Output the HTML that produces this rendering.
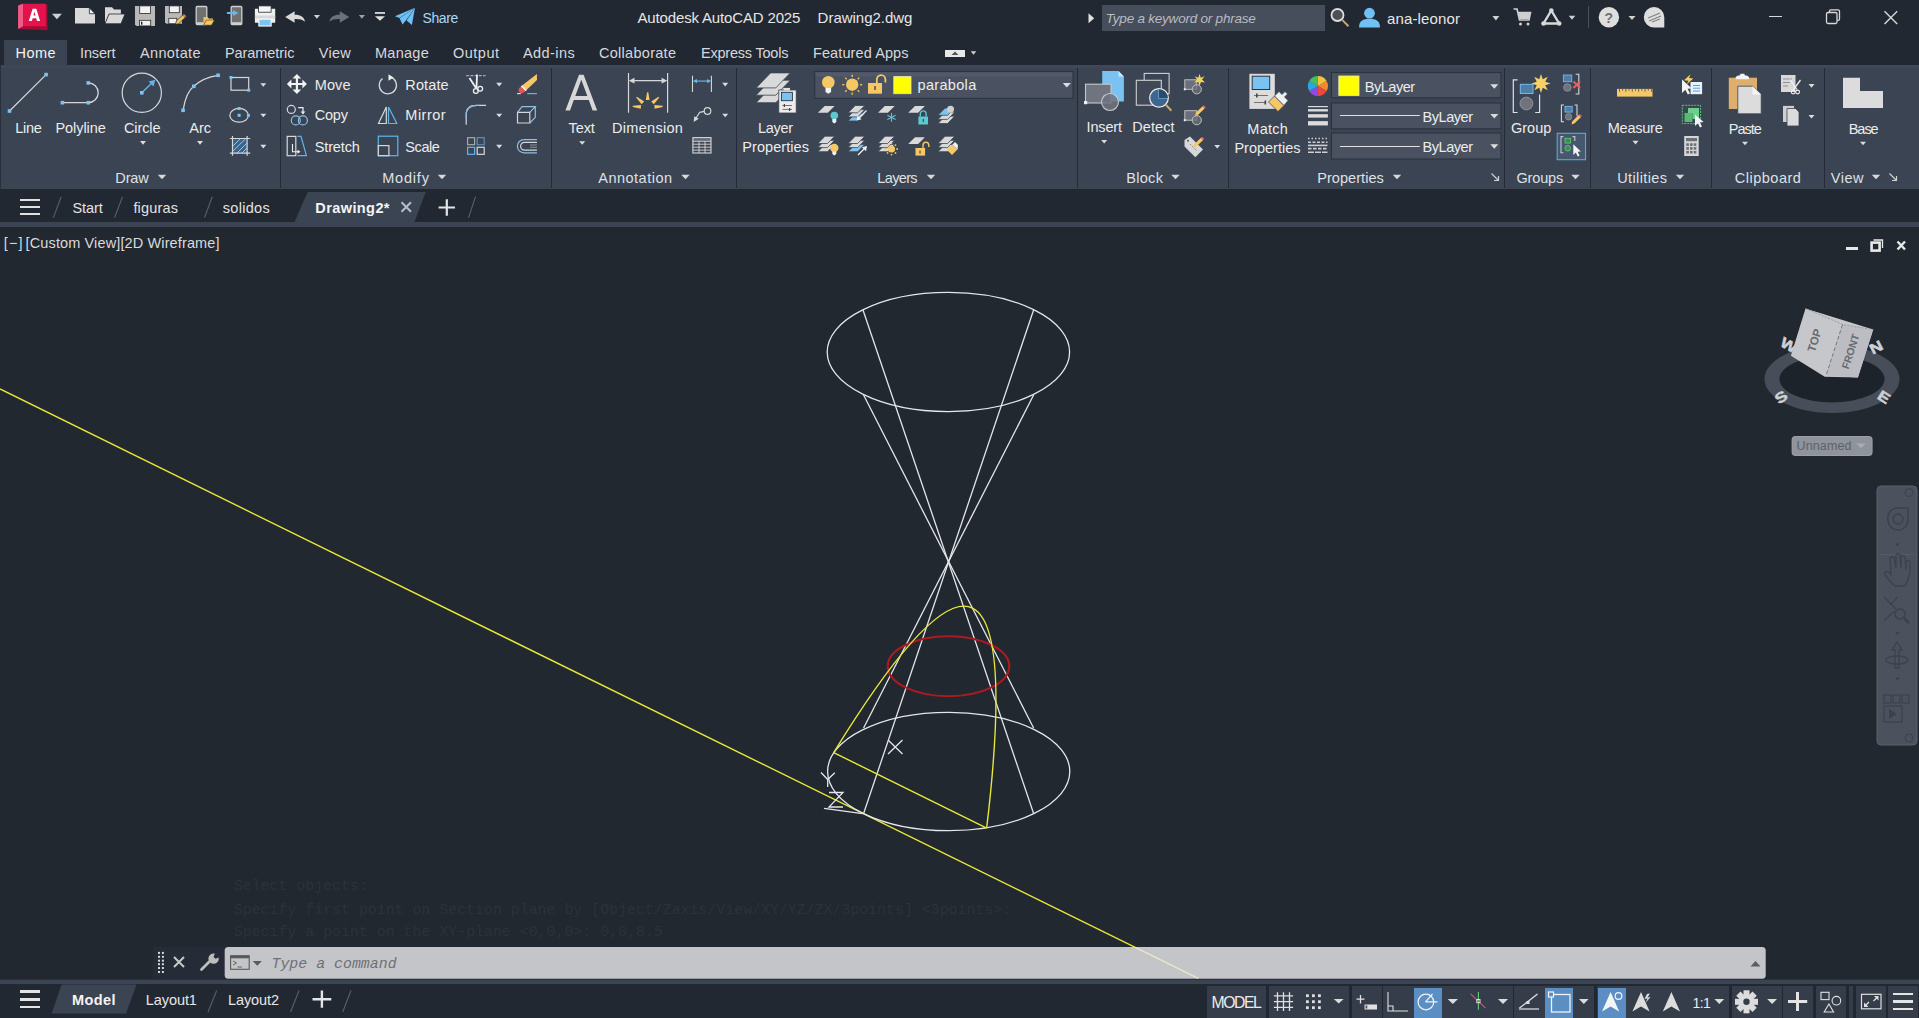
<!DOCTYPE html>
<html><head><meta charset="utf-8"><style>
html,body{margin:0;padding:0;}
body{width:1919px;height:1018px;overflow:hidden;position:relative;background:#212830;font-family:"Liberation Sans",sans-serif;}
body>div,body>svg{position:absolute;}
body>svg{left:0;top:0;}
.t{white-space:nowrap;}
</style></head><body>
<div style="left:0px;top:0px;width:1919px;height:65px;background:#222832;"></div>
<div style="left:0px;top:65px;width:1919px;height:124px;background:#3b4453;"></div>
<div style="left:0px;top:65px;width:1919px;height:3px;background:#3f4858;"></div>
<div style="left:0px;top:65px;width:1px;height:124px;background:#2a303b;"></div>
<div style="left:4px;top:40px;width:63px;height:26px;background:#3b4453;"></div>
<div style="left:280px;top:68px;width:1px;height:120px;background:#252b36;"></div>
<div style="left:551px;top:68px;width:1px;height:120px;background:#252b36;"></div>
<div style="left:736px;top:68px;width:1px;height:120px;background:#252b36;"></div>
<div style="left:1077px;top:68px;width:1px;height:120px;background:#252b36;"></div>
<div style="left:1228px;top:68px;width:1px;height:120px;background:#252b36;"></div>
<div style="left:1504px;top:68px;width:1px;height:120px;background:#252b36;"></div>
<div style="left:1590px;top:68px;width:1px;height:120px;background:#252b36;"></div>
<div style="left:1711px;top:68px;width:1px;height:120px;background:#252b36;"></div>
<div style="left:1824px;top:68px;width:1px;height:120px;background:#252b36;"></div>
<div style="left:0px;top:189px;width:1919px;height:33px;background:#222832;"></div>
<div style="left:0px;top:222px;width:1919px;height:5px;background:#3b4453;"></div>
<div style="left:0px;top:227px;width:1919px;height:752px;background:#212830;"></div>
<div style="left:0px;top:979px;width:1919px;height:5px;background:#3b4453;"></div>
<div style="left:0px;top:984px;width:1919px;height:34px;background:#222832;"></div>
<div class="t" style="left:422.5px;top:11.35px;font-size:14px;line-height:14px;color:#a9d7f7;font-weight:400;font-family:'Liberation Sans',sans-serif;letter-spacing:-0.415px;">Share</div>
<div class="t" style="left:637.5px;top:10.30px;font-size:15px;line-height:15px;color:#e6e6e6;font-weight:400;font-family:'Liberation Sans',sans-serif;letter-spacing:-0.152px;">Autodesk AutoCAD 2025</div>
<div class="t" style="left:817.6px;top:10.30px;font-size:15px;line-height:15px;color:#e6e6e6;font-weight:400;font-family:'Liberation Sans',sans-serif;letter-spacing:-0.023px;">Drawing2.dwg</div>
<div style="left:1102px;top:5px;width:223px;height:26px;background:#464d5b;"></div>
<div class="t" style="left:1105.8px;top:11.57px;font-size:13.5px;line-height:13.5px;color:#b9bcc2;font-weight:400;font-family:'Liberation Sans',sans-serif;font-style:italic;letter-spacing:-0.221px;">Type a keyword or phrase</div>
<div class="t" style="left:1387px;top:10.80px;font-size:15px;line-height:15px;color:#e6e6e6;font-weight:400;font-family:'Liberation Sans',sans-serif;letter-spacing:0.142px;">ana-leonor</div>
<div style="left:1588px;top:6px;width:1px;height:22px;background:#4a505b;"></div>
<div style="left:1768.5px;top:15.5px;width:13px;height:1.3px;background:#d8d8d8;"></div>
<div class="t" style="left:15.5px;top:45.52px;font-size:14.5px;line-height:14.5px;color:#f2f2f2;font-weight:400;font-family:'Liberation Sans',sans-serif;letter-spacing:0.440px;">Home</div>
<div class="t" style="left:80px;top:45.52px;font-size:14.5px;line-height:14.5px;color:#d6d8dc;font-weight:400;font-family:'Liberation Sans',sans-serif;letter-spacing:-0.153px;">Insert</div>
<div class="t" style="left:140px;top:45.52px;font-size:14.5px;line-height:14.5px;color:#d6d8dc;font-weight:400;font-family:'Liberation Sans',sans-serif;letter-spacing:0.350px;">Annotate</div>
<div class="t" style="left:225px;top:45.52px;font-size:14.5px;line-height:14.5px;color:#d6d8dc;font-weight:400;font-family:'Liberation Sans',sans-serif;letter-spacing:-0.067px;">Parametric</div>
<div class="t" style="left:318.75px;top:45.52px;font-size:14.5px;line-height:14.5px;color:#d6d8dc;font-weight:400;font-family:'Liberation Sans',sans-serif;letter-spacing:0.277px;">View</div>
<div class="t" style="left:375px;top:45.52px;font-size:14.5px;line-height:14.5px;color:#d6d8dc;font-weight:400;font-family:'Liberation Sans',sans-serif;letter-spacing:0.270px;">Manage</div>
<div class="t" style="left:453px;top:45.52px;font-size:14.5px;line-height:14.5px;color:#d6d8dc;font-weight:400;font-family:'Liberation Sans',sans-serif;letter-spacing:0.494px;">Output</div>
<div class="t" style="left:523px;top:45.52px;font-size:14.5px;line-height:14.5px;color:#d6d8dc;font-weight:400;font-family:'Liberation Sans',sans-serif;letter-spacing:0.422px;">Add-ins</div>
<div class="t" style="left:599px;top:45.52px;font-size:14.5px;line-height:14.5px;color:#d6d8dc;font-weight:400;font-family:'Liberation Sans',sans-serif;letter-spacing:0.284px;">Collaborate</div>
<div class="t" style="left:701px;top:45.52px;font-size:14.5px;line-height:14.5px;color:#d6d8dc;font-weight:400;font-family:'Liberation Sans',sans-serif;letter-spacing:-0.216px;">Express Tools</div>
<div class="t" style="left:813px;top:45.52px;font-size:14.5px;line-height:14.5px;color:#d6d8dc;font-weight:400;font-family:'Liberation Sans',sans-serif;letter-spacing:0.099px;">Featured Apps</div>
<div style="left:945px;top:49.5px;width:20px;height:7px;background:#e8e8e8;"></div>
<svg width="1919" height="1018" viewBox="0 0 1919 1018"><path d="M18.1 5.6 L23.1 3.75 L47.5 4.5 L47.5 30.3 L18.1 29 Z" fill="#a60a35"/>
<path d="M18.1 5.6 L23.1 3.75 L23.1 26.3 L18.1 29 Z" fill="#ef5c86"/>
<rect x="23.1" y="3.75" width="22.8" height="22.5" fill="#e3134b"/>
<path d="M28.8 21 L32.6 8.8 L36.3 8.8 L40.1 21 L37 21 L36.2 18.3 L32.7 18.3 L31.9 21 Z M33.4 15.6 L35.5 15.6 L34.45 11.8 Z" fill="#ffffff" fill-rule="evenodd"/>
<path d="M51.9 13.75 L61.9 13.75 L56.9 19.25 Z" fill="#d0d0d0"/>
<path d="M75 8.1 L89.4 8.1 L95 13.7 L95 23.4 L75 23.4 Z" fill="#d9d9d9"/>
<path d="M89.4 8.1 L89.4 13.7 L95 13.7 Z" fill="#f4f4f4" stroke="#222832" stroke-width="0.8"/>
<path d="M105 7.2 L112 7.2 L114 9.6 L120.9 9.6 L120.9 14 L109 14 L105 23.7 Z" fill="#d9d9d9"/>
<path d="M109 14 L125 14 L121 23.75 L105 23.75 Z" fill="#d9d9d9" stroke="#222832" stroke-width="0.8"/>
<path d="M135 5.9 L155 5.9 L155 25.9 L136.5 25.9 L135 24.4 Z" fill="#b9b9b9"/>
<rect x="139.7" y="5.9" width="10.9" height="7.5" fill="#f2f2f2" stroke="#2a2a2a" stroke-width="0.8"/>
<rect x="139.5" y="20.3" width="11.2" height="5.6" fill="#f2f2f2" stroke="#2a2a2a" stroke-width="0.8"/>
<rect x="141" y="21.700000000000003" width="1.4" height="3" fill="#222"/>
<path d="M165 5.9 L182 5.9 L182 23.75 L166.5 23.75 L165 22.2 Z" fill="#b9b9b9"/>
<rect x="169.3" y="5.9" width="10" height="6.8" fill="#f2f2f2" stroke="#2a2a2a" stroke-width="0.8"/>
<rect x="168.8" y="18.3" width="8" height="5.4" fill="#f2f2f2" stroke="#2a2a2a" stroke-width="0.8"/>
<path d="M175.5 24.5 L176.3 21 L182.8 15 L185.2 17.4 L178.8 23.6 Z" fill="#f1c55c" stroke="#222" stroke-width="0.6"/>
<path d="M182.8 15 L184 13.9 L186.4 16.3 L185.2 17.4 Z" fill="#e66" />
<rect x="196.2" y="6.5" width="10.600000000000001" height="18.1" rx="1" fill="#707070" stroke="#cfcfcf" stroke-width="1.3"/>
<rect x="196.2" y="22.200000000000003" width="10.600000000000001" height="2.4" fill="#cfcfcf"/>
<path d="M203.5 17 L207.5 17 L208.8 18.4 L213 18.4 L213 20 L206.5 20 L203.5 25 Z" fill="#f3c159"/>
<path d="M206.5 20 L214.5 20 L211.5 25.2 L203.5 25.2 Z" fill="#f6c862" stroke="#222" stroke-width="0.5"/>
<rect x="231.2" y="6.5" width="10.600000000000001" height="18.1" rx="1" fill="#707070" stroke="#cfcfcf" stroke-width="1.3"/>
<rect x="231.2" y="22.200000000000003" width="10.600000000000001" height="2.4" fill="#cfcfcf"/>
<path d="M226.9 12 L233 12 L233 10 L238.4 13 L233 16 L233 14 L226.9 14 Z" fill="#64b8f0"/>
<rect x="254.9" y="8.75" width="20.3" height="14" fill="#f0f0f0"/>
<rect x="254.9" y="15.5" width="20.3" height="3" fill="#d8d8d8"/>
<rect x="258.6" y="5.9" width="12.5" height="6.3" fill="#f6f6f6" stroke="#2a2a2a" stroke-width="0.8"/>
<rect x="258.9" y="19.2" width="12.2" height="6.8" fill="#7cc4f5" stroke="#f4f4f4" stroke-width="1.2"/>
<path d="M285.2 16.9 L294.6 11.2 L294.6 14.8 C300 14.6 304.5 16.8 304.9 21.8 C302.5 19.4 299 18.8 294.6 19 L294.6 22.8 Z" fill="#d9d9d9"/>
<path d="M313.79999999999995 14.999999999999998 L320.0 14.999999999999998 L316.9 18.799999999999997 Z" fill="#d0d0d0"/>
<path d="M349.25 16.9 L339.8 11.2 L339.8 14.8 C334.4 14.6 330 16.8 329.6 21.8 C332 19.4 335.4 18.8 339.8 19 L339.8 22.8 Z" fill="#6b7179"/>
<path d="M358.79999999999995 14.999999999999998 L365.0 14.999999999999998 L361.9 18.799999999999997 Z" fill="#9ba0a7"/>
<rect x="374.9" y="12" width="10.1" height="1.9" fill="#cfcfcf"/>
<path d="M374.9 16.15 L385.0 16.15 L379.95 20.85 Z" fill="#e0e0e0"/>
<path d="M415 7.8 L394.9 16.2 L399.5 18 Z" fill="#6ec0f5"/>
<path d="M415 7.8 L399.6 18.2 L402.5 24.6 L406.2 20.1 Z" fill="#6ec0f5"/>
<path d="M415 7.8 L406.6 20.5 L411.9 25 Z" fill="#6ec0f5"/>
<path d="M1088.5 13.3 L1094.2 18.3 L1088.5 23.3 Z" fill="#e0e0e0"/>
<circle cx="1337.5" cy="15" r="6" fill="#4a4f58" stroke="#dcdcdc" stroke-width="1.8"/>
<line x1="1342" y1="19.6" x2="1348.5" y2="26.2" stroke="#c9a86a" stroke-width="2"/>
<circle cx="1369.5" cy="13.2" r="5.4" fill="#6ec0f5"/>
<path d="M1359 27.5 C1359 21 1363 18.8 1369.5 18.8 C1376 18.8 1380 21 1380 27.5 Z" fill="#6ec0f5"/>
<path d="M1492.4 15.95 L1499.4 15.95 L1495.9 20.45 Z" fill="#d0d0d0"/>
<path d="M1513.5 9 L1517 9 L1519.5 20 L1529 20 L1530.5 12.5 L1518 12.5" fill="none" stroke="#d0d0d0" stroke-width="1.6"/>
<path d="M1518.5 13 L1530 13 L1528.8 19 L1519.6 19 Z" fill="#d0d0d0"/>
<circle cx="1520.5" cy="24" r="1.5" fill="#d0d0d0"/><circle cx="1528" cy="24" r="1.5" fill="#d0d0d0"/>
<path d="M1551.3 10.5 L1543.5 23.5 L1559.2 23.5 Z" fill="none" stroke="#d8d8d8" stroke-width="2.4" stroke-linejoin="round"/>
<circle cx="1551.3" cy="10.5" r="2.3" fill="#d8d8d8"/><circle cx="1543.5" cy="23.5" r="2.3" fill="#d8d8d8"/><circle cx="1559.2" cy="23.5" r="2.3" fill="#d8d8d8"/>
<path d="M1568.75 15.8 L1575.25 15.8 L1572 19.8 Z" fill="#d0d0d0"/>
<circle cx="1608.9" cy="17.2" r="10.2" fill="#dedede"/>
<text x="1608.9" y="22.6" font-family="Liberation Sans" font-size="14" font-weight="700" text-anchor="middle" fill="#6f6f6f">?</text>
<path d="M1628.5 16.0 L1635.5 16.0 L1632 20.0 Z" fill="#d0d0d0"/>
<path d="M1654 7 A10.2 10.2 0 0 0 1643.8 17.2 A10.2 10.2 0 0 0 1654 27.4 L1664.3 27.4 L1664.3 17.2 A10.2 10.2 0 0 0 1654 7 Z" fill="#dedede"/>
<path d="M1648 18 L1660 13 M1649 21 L1661 16 M1652 22 L1660 19" stroke="#808080" stroke-width="1.1"/>
<rect x="1826.5" y="12.5" width="10.5" height="11" rx="1.5" fill="none" stroke="#d8d8d8" stroke-width="1.3"/>
<path d="M1829.5 12.3 L1829.5 11 Q1829.5 9.8 1830.8 9.8 L1838 9.8 Q1839.5 9.8 1839.5 11.3 L1839.5 19 Q1839.5 20.4 1838.3 20.4 L1837.3 20.4" fill="none" stroke="#d8d8d8" stroke-width="1.3"/>
<path d="M1884.5 11.2 L1897.2 23.9 M1897.2 11.2 L1884.5 23.9" stroke="#d8d8d8" stroke-width="1.4"/>
<path d="M951.5 55 L955 51.5 L958.5 55 Z" fill="#555"/>
<path d="M970.75 51.25 L976.25 51.25 L973.5 54.75 Z" fill="#d0d0d0"/></svg>
<div class="t" style="left:115.3px;top:170.52px;font-size:14.5px;line-height:14.5px;color:#dfe1e4;font-weight:400;font-family:'Liberation Sans',sans-serif;letter-spacing:-0.112px;">Draw</div>
<div class="t" style="left:382.2px;top:170.52px;font-size:14.5px;line-height:14.5px;color:#dfe1e4;font-weight:400;font-family:'Liberation Sans',sans-serif;letter-spacing:0.798px;">Modify</div>
<div class="t" style="left:598.3px;top:170.52px;font-size:14.5px;line-height:14.5px;color:#dfe1e4;font-weight:400;font-family:'Liberation Sans',sans-serif;letter-spacing:0.485px;">Annotation</div>
<div class="t" style="left:877.3px;top:170.52px;font-size:14.5px;line-height:14.5px;color:#dfe1e4;font-weight:400;font-family:'Liberation Sans',sans-serif;letter-spacing:-0.645px;">Layers</div>
<div class="t" style="left:1126.2px;top:170.52px;font-size:14.5px;line-height:14.5px;color:#dfe1e4;font-weight:400;font-family:'Liberation Sans',sans-serif;letter-spacing:0.310px;">Block</div>
<div class="t" style="left:1317.2px;top:170.52px;font-size:14.5px;line-height:14.5px;color:#dfe1e4;font-weight:400;font-family:'Liberation Sans',sans-serif;letter-spacing:0.057px;">Properties</div>
<div class="t" style="left:1516.4px;top:170.52px;font-size:14.5px;line-height:14.5px;color:#dfe1e4;font-weight:400;font-family:'Liberation Sans',sans-serif;letter-spacing:-0.130px;">Groups</div>
<div class="t" style="left:1617.2px;top:170.52px;font-size:14.5px;line-height:14.5px;color:#dfe1e4;font-weight:400;font-family:'Liberation Sans',sans-serif;letter-spacing:0.384px;">Utilities</div>
<div class="t" style="left:1734.7px;top:170.52px;font-size:14.5px;line-height:14.5px;color:#dfe1e4;font-weight:400;font-family:'Liberation Sans',sans-serif;letter-spacing:0.517px;">Clipboard</div>
<div class="t" style="left:1830.8px;top:170.52px;font-size:14.5px;line-height:14.5px;color:#dfe1e4;font-weight:400;font-family:'Liberation Sans',sans-serif;letter-spacing:0.511px;">View</div>
<div class="t" style="left:15.3px;top:120.72px;font-size:14.5px;line-height:14.5px;color:#ececec;font-weight:400;font-family:'Liberation Sans',sans-serif;letter-spacing:-0.272px;">Line</div>
<div class="t" style="left:55.4px;top:120.72px;font-size:14.5px;line-height:14.5px;color:#ececec;font-weight:400;font-family:'Liberation Sans',sans-serif;letter-spacing:-0.054px;">Polyline</div>
<div class="t" style="left:124px;top:120.72px;font-size:14.5px;line-height:14.5px;color:#ececec;font-weight:400;font-family:'Liberation Sans',sans-serif;letter-spacing:-0.112px;">Circle</div>
<div class="t" style="left:189.2px;top:120.72px;font-size:14.5px;line-height:14.5px;color:#ececec;font-weight:400;font-family:'Liberation Sans',sans-serif;letter-spacing:0.074px;">Arc</div>
<div class="t" style="left:314.7px;top:77.62px;font-size:14.5px;line-height:14.5px;color:#ececec;font-weight:400;font-family:'Liberation Sans',sans-serif;letter-spacing:0.114px;">Move</div>
<div class="t" style="left:405.3px;top:77.62px;font-size:14.5px;line-height:14.5px;color:#ececec;font-weight:400;font-family:'Liberation Sans',sans-serif;letter-spacing:0.116px;">Rotate</div>
<div class="t" style="left:314.7px;top:108.22px;font-size:14.5px;line-height:14.5px;color:#ececec;font-weight:400;font-family:'Liberation Sans',sans-serif;letter-spacing:-0.184px;">Copy</div>
<div class="t" style="left:405.3px;top:108.22px;font-size:14.5px;line-height:14.5px;color:#ececec;font-weight:400;font-family:'Liberation Sans',sans-serif;letter-spacing:0.509px;">Mirror</div>
<div class="t" style="left:314.7px;top:139.62px;font-size:14.5px;line-height:14.5px;color:#ececec;font-weight:400;font-family:'Liberation Sans',sans-serif;letter-spacing:-0.123px;">Stretch</div>
<div class="t" style="left:405.3px;top:139.62px;font-size:14.5px;line-height:14.5px;color:#ececec;font-weight:400;font-family:'Liberation Sans',sans-serif;letter-spacing:-0.418px;">Scale</div>
<div class="t" style="left:568.6px;top:120.72px;font-size:14.5px;line-height:14.5px;color:#ececec;font-weight:400;font-family:'Liberation Sans',sans-serif;letter-spacing:-0.131px;">Text</div>
<div class="t" style="left:612.1px;top:120.72px;font-size:14.5px;line-height:14.5px;color:#ececec;font-weight:400;font-family:'Liberation Sans',sans-serif;letter-spacing:0.287px;">Dimension</div>
<svg width="1919" height="1018" viewBox="0 0 1919 1018"><path d="M157.75 174.75 L166.25 174.75 L162.00 179.25 Z" fill="#d8d8d8"/>
<path d="M437.75 174.75 L446.25 174.75 L442.00 179.25 Z" fill="#d8d8d8"/>
<path d="M681.25 174.75 L689.75 174.75 L685.50 179.25 Z" fill="#d8d8d8"/>
<path d="M926.75 174.75 L935.25 174.75 L931.00 179.25 Z" fill="#d8d8d8"/>
<path d="M1171.25 174.75 L1179.75 174.75 L1175.50 179.25 Z" fill="#d8d8d8"/>
<path d="M1392.75 174.75 L1401.25 174.75 L1397.00 179.25 Z" fill="#d8d8d8"/>
<path d="M1571.25 174.75 L1579.75 174.75 L1575.50 179.25 Z" fill="#d8d8d8"/>
<path d="M1675.75 174.75 L1684.25 174.75 L1680.00 179.25 Z" fill="#d8d8d8"/>
<path d="M1871.75 174.75 L1880.25 174.75 L1876.00 179.25 Z" fill="#d8d8d8"/>
<path d="M1491.5 173.5 L1498.5 180.5 M1498.5 176 L1498.5 180.5 L1494 180.5" stroke="#d0d0d0" stroke-width="1.2" fill="none"/>
<path d="M1889.5 173.5 L1896.5 180.5 M1896.5 176 L1896.5 180.5 L1892 180.5" stroke="#d0d0d0" stroke-width="1.2" fill="none"/>
<line x1="9.5" y1="111" x2="46.1" y2="74.6" stroke="#d7d7d7" stroke-width="1.2"/>
<rect x="7.70" y="109.20" width="3.6" height="3.6" fill="#7cc3f0"/>
<rect x="44.30" y="72.80" width="3.6" height="3.6" fill="#7cc3f0"/>
<path d="M62.4 102.7 L88.3 102.7 A9.9 9.9 0 0 0 88.3 82.9" fill="none" stroke="#d7d7d7" stroke-width="1.3"/>
<rect x="60.60" y="100.90" width="3.6" height="3.6" fill="#7cc3f0"/>
<rect x="86.50" y="100.90" width="3.6" height="3.6" fill="#7cc3f0"/>
<rect x="86.50" y="81.10" width="3.6" height="3.6" fill="#7cc3f0"/>
<circle cx="141.8" cy="92.8" r="19.6" fill="none" stroke="#d7d7d7" stroke-width="1.2"/>
<line x1="141.8" y1="92.8" x2="153.5" y2="81.5" stroke="#64b4ec" stroke-width="1.4"/>
<path d="M155.3 79.7 L148.5 81.5 L153.5 86.5 Z" fill="#64b4ec"/>
<rect x="140.00" y="91.00" width="3.6" height="3.6" fill="#7cc3f0"/>
<path d="M140.00 141.10 L146.00 141.10 L143.00 144.70 Z" fill="#dcdcdc"/>
<path d="M183.1 110.3 Q186 92 193.8 86.3 Q203 77.5 218.1 75.3" fill="none" stroke="#d7d7d7" stroke-width="1.2"/>
<rect x="181.30" y="108.50" width="3.6" height="3.6" fill="#7cc3f0"/>
<rect x="192.00" y="84.50" width="3.6" height="3.6" fill="#7cc3f0"/>
<rect x="216.30" y="73.50" width="3.6" height="3.6" fill="#7cc3f0"/>
<path d="M197.00 141.10 L203.00 141.10 L200.00 144.70 Z" fill="#dcdcdc"/>
<rect x="231" y="77.5" width="17.7" height="12.7" fill="none" stroke="#d7d7d7" stroke-width="1.2"/>
<rect x="229.50" y="76.00" width="3" height="3" fill="#7cc3f0"/>
<rect x="247.20" y="88.70" width="3" height="3" fill="#7cc3f0"/>
<path d="M260.30 83.20 L266.30 83.20 L263.30 86.80 Z" fill="#dcdcdc"/>
<ellipse cx="239.1" cy="115.3" rx="9.3" ry="6.9" fill="none" stroke="#d7d7d7" stroke-width="1.2"/>
<rect x="237.60" y="107.00" width="3" height="3" fill="#7cc3f0"/>
<rect x="237.60" y="113.80" width="3" height="3" fill="#7cc3f0"/>
<rect x="246.90" y="113.80" width="3" height="3" fill="#7cc3f0"/>
<path d="M260.30 113.70 L266.30 113.70 L263.30 117.30 Z" fill="#dcdcdc"/>
<rect x="232.5" y="138.5" width="14.6" height="14.6" fill="#3b6488"/>
<path d="M233 146 L240 139 M233 151 L245.5 138.8 M237 153 L247 143 M242 153 L247 148" stroke="#8fc8ef" stroke-width="1"/>
<path d="M232.5 135.9 L232.5 155.8 M247.1 135.9 L247.1 155.8 M229.9 138.5 L250.2 138.5 M229.9 153.1 L250.2 153.1" stroke="#d7d7d7" stroke-width="1.2"/>
<path d="M260.30 144.80 L266.30 144.80 L263.30 148.40 Z" fill="#dcdcdc"/>
<path d="M296.9 76 L296.9 92 M288.9 84 L304.9 84" stroke="#f2f2f2" stroke-width="2.2"/>
<path d="M296.9 74 L292.5 78.5 L301.3 78.5 Z M296.9 94 L292.5 89.5 L301.3 89.5 Z M286.9 84 L291.4 79.6 L291.4 88.4 Z M306.9 84 L302.4 79.6 L302.4 88.4 Z" fill="#f2f2f2"/>
<path d="M391 77.2 A8.6 8.6 0 1 1 382.5 78.5" fill="none" stroke="#d7d7d7" stroke-width="1.3"/>
<path d="M388.5 74.2 L393.5 77.5 L388.5 80.8 Z" fill="#f0f0f0"/>
<path d="M466.2 75.7 L485.6 75.7" stroke="#a8a8a8" stroke-width="1.2" stroke-dasharray="3 1.2"/>
<path d="M469.5 78 L476 88 M477 74.5 L476.5 88" stroke="#f0f0f0" stroke-width="1.8"/>
<circle cx="475.8" cy="91" r="2.4" fill="none" stroke="#f0f0f0" stroke-width="1.3"/><circle cx="480.2" cy="88.8" r="2.4" fill="none" stroke="#f0f0f0" stroke-width="1.3"/>
<path d="M496.20 82.80 L502.20 82.80 L499.20 86.40 Z" fill="#dcdcdc"/>
<path d="M536.9 74 L537 80 L525.5 91 L520.8 86.5 Z" fill="#f5c765"/>
<path d="M520.8 86.5 L525.5 91 L523.6 92.8 Q521 94 519.2 92.2 Q517.8 90.5 519 88.3 Z" fill="#e8525a"/>
<path d="M521.4 86 L526.2 90.6" stroke="#f4f4f4" stroke-width="1.5"/>
<path d="M517 93.6 L520.8 93.6" stroke="#d7d7d7" stroke-width="1.2"/><path d="M527.2 93.6 L536.9 93.6" stroke="#64b4ec" stroke-width="1.2"/>
<circle cx="291.3" cy="109.4" r="4" fill="none" stroke="#d7d7d7" stroke-width="1.2"/>
<path d="M298.2 107.6 L303 107.6 L303 112" fill="none" stroke="#f0f0f0" stroke-width="1.2"/><path d="M300.7 111.5 L305.3 111.5 L303 114.5 Z" fill="#f0f0f0"/>
<circle cx="295.8" cy="120.4" r="4.5" fill="none" stroke="#8cc0e6" stroke-width="1.2"/><circle cx="302.9" cy="120.4" r="4.5" fill="none" stroke="#8cc0e6" stroke-width="1.2"/>
<path d="M386.3 107 L386.3 123.5 L378.5 123.5 Z" fill="none" stroke="#d7d7d7" stroke-width="1.2" stroke-linejoin="miter"/>
<path d="M388.5 107 L388.5 123.5 L396.8 123.5 Z" fill="none" stroke="#64b4ec" stroke-width="1.2"/>
<path d="M466.2 124.8 L466.2 114.5 Q466.2 105.4 477 105.4 L486.1 105.4" fill="none" stroke="#d7d7d7" stroke-width="1.2"/>
<path d="M466.2 118 L466.2 114.5 Q466.2 105.4 477 105.4 L479 105.4" fill="none" stroke="#8cb8dc" stroke-width="1.2"/>
<path d="M496.20 113.70 L502.20 113.70 L499.20 117.30 Z" fill="#dcdcdc"/>
<path d="M517.5 112.4 L529.8 112.4 L529.8 123 L517.5 123 Z" fill="none" stroke="#d7d7d7" stroke-width="1.2"/>
<path d="M517.5 112.4 L522 106.6 L535.3 106.6 L529.8 112.4 M535.3 106.6 L535.3 117.3 L529.8 123" fill="none" stroke="#8cc0e6" stroke-width="1.2"/>
<rect x="287.2" y="136.4" width="8.6" height="19.3" fill="none" stroke="#d7d7d7" stroke-width="1.2"/>
<path d="M297.5 136.4 L301 136.4 L306.4 155.7 L297.5 155.7" fill="none" stroke="#64b4ec" stroke-width="1.2"/>
<path d="M292.5 144 L292.5 151.8 L298 151.8" fill="none" stroke="#f0f0f0" stroke-width="1.1"/><path d="M297.5 149.8 L300.5 151.8 L297.5 153.8 Z" fill="#f0f0f0"/>
<rect x="378.3" y="136.2" width="19.5" height="19.5" fill="none" stroke="#64b4ec" stroke-width="1.2"/>
<rect x="378.3" y="145.6" width="10.6" height="10.1" fill="none" stroke="#d7d7d7" stroke-width="1.2"/>
<rect x="467.6" y="137.7" width="7" height="7" fill="none" stroke="#a9a9a9" stroke-width="1.2"/>
<rect x="477.2" y="137.7" width="7" height="7" fill="none" stroke="#5d8fb8" stroke-width="1.2"/>
<rect x="467.6" y="147.3" width="7" height="7" fill="none" stroke="#64b4ec" stroke-width="1.2"/>
<rect x="477.2" y="147.3" width="7" height="7" fill="none" stroke="#d7d7d7" stroke-width="1.2"/>
<path d="M496.20 144.80 L502.20 144.80 L499.20 148.40 Z" fill="#dcdcdc"/>
<path d="M536.9 139.6 L524 139.6 A6.6 6.6 0 0 0 524 152.8 L536.9 152.8" fill="none" stroke="#8cc0e6" stroke-width="1.2"/>
<path d="M536.9 142.3 L524.5 142.3 A3.9 3.9 0 0 0 524.5 150.1 L536.9 150.1" fill="none" stroke="#d7d7d7" stroke-width="1.2"/>
<path d="M530 145 L536.9 145 M530 147.3 L536.9 147.3" stroke="#8a8f96" stroke-width="1"/>
<path d="M565.4 110.5 L579 74.8 L583.6 74.8 L597.2 110.5 L592.6 110.5 L588.8 100 L573.8 100 L570 110.5 Z M575.3 96 L587.3 96 L581.3 79.8 Z" fill="#d7d7d7" fill-rule="evenodd"/>
<path d="M579.20 141.20 L585.20 141.20 L582.20 144.80 Z" fill="#dcdcdc"/>
<path d="M628.5 73 L628.5 112.8 M667.6 73 L667.6 112.8 M631 80.7 L665 80.7" stroke="#d7d7d7" stroke-width="1.2"/>
<path d="M628.8 80.7 L634.5 77.8 L634.5 83.6 Z M667.3 80.7 L661.6 77.8 L661.6 83.6 Z" fill="#d7d7d7"/>
<path d="M649.60 99.90 L648.30 92.20 L647.10 92.20 L645.80 99.90 Z" fill="#f5c765"/>
<path d="M653.80 104.26 L659.25 97.61 L658.45 96.72 L651.26 101.44 Z" fill="#f5c765"/>
<path d="M644.14 101.44 L636.95 96.72 L636.15 97.61 L641.60 104.26 Z" fill="#f5c765"/>
<path d="M654.59 108.74 L662.71 107.01 L662.65 105.82 L654.39 104.95 Z" fill="#f5c765"/>
<path d="M641.01 104.95 L632.75 105.82 L632.69 107.01 L640.81 108.74 Z" fill="#f5c765"/>
<path d="M692.5 75.7 L692.5 92 M711.4 75.7 L711.4 92" stroke="#d7d7d7" stroke-width="1.1"/>
<path d="M694 81.1 L710 81.1" stroke="#64b4ec" stroke-width="1.2"/><path d="M693 81.1 L697 79 L697 83.2 Z M711 81.1 L707 79 L707 83.2 Z" fill="#64b4ec"/>
<path d="M722.20 82.80 L728.20 82.80 L725.20 86.40 Z" fill="#dcdcdc"/>
<circle cx="707.5" cy="111" r="3.3" fill="none" stroke="#d7d7d7" stroke-width="1.2"/>
<path d="M704.2 111.4 L699.7 112.3 L695.5 119" fill="none" stroke="#d7d7d7" stroke-width="1.2"/><path d="M693.7 122 L694.2 116.2 L698.8 118.8 Z" fill="#d7d7d7"/>
<path d="M722.20 113.70 L728.20 113.70 L725.20 117.30 Z" fill="#dcdcdc"/>
<rect x="692.9" y="137.6" width="18.1" height="15.4" fill="none" stroke="#d7d7d7" stroke-width="1.1"/>
<path d="M692.9 141.3 L711 141.3 M692.9 144.2 L711 144.2 M692.9 147.2 L711 147.2 M692.9 150.1 L711 150.1 M699 141.3 L699 153 M705 141.3 L705 153" stroke="#d7d7d7" stroke-width="0.9"/>
<rect x="692.9" y="137.6" width="18.1" height="3.7" fill="#d7d7d7" opacity="0.25"/></svg>
<div class="t" style="left:758px;top:120.72px;font-size:14.5px;line-height:14.5px;color:#ececec;font-weight:400;font-family:'Liberation Sans',sans-serif;letter-spacing:-0.318px;">Layer</div>
<div class="t" style="left:742.3px;top:140.32px;font-size:14.5px;line-height:14.5px;color:#ececec;font-weight:400;font-family:'Liberation Sans',sans-serif;letter-spacing:0.068px;">Properties</div>
<svg width="1919" height="1018" viewBox="0 0 1919 1018"><path d="M756.10 102.70 L770.60 87.70 L790.30 87.70 L775.80 102.70 Z" fill="#d9d9d9" stroke="#3b4453" stroke-width="0.8"/>
<path d="M756.10 95.20 L770.60 80.20 L790.30 80.20 L775.80 95.20 Z" fill="#d9d9d9" stroke="#3b4453" stroke-width="0.8"/>
<path d="M756.10 87.90 L770.60 72.90 L790.30 72.90 L775.80 87.90 Z" fill="#d9d9d9" stroke="#3b4453" stroke-width="0.8"/>
<rect x="778.8" y="90" width="17.4" height="23" fill="#ececec" stroke="#3b4453" stroke-width="0.8"/>
<rect x="783.9" y="88" width="6.1" height="2.5" fill="#e0e0e0"/>
<rect x="781.4" y="92.3" width="11" height="8.4" fill="#79c2f2" stroke="#2a3340" stroke-width="0.9"/>
<path d="M782.5 105.5 L792 105.5 M782.5 109.4 L792 109.4" stroke="#555" stroke-width="0.8"/><rect x="783.8" y="104" width="1.2" height="3" fill="#444"/><rect x="789" y="108" width="1.2" height="3" fill="#444"/>
<rect x="814.7" y="71.6" width="258.3" height="26.7" fill="#4a5262" stroke="#2b313b" stroke-width="1"/>
<rect x="815.5" y="72.4" width="256.7" height="4" fill="#525a6a"/>
<circle cx="828.3" cy="82.3" r="6.3" fill="#f5c765"/><path d="M825.5 88 L831.1 88 L831.1 92 L828.3 93.8 L825.5 92 Z" fill="#f2f2f2"/>
<circle cx="852.2" cy="84.7" r="6.2" fill="#f5c765"/>
<line x1="860.00" y1="84.70" x2="862.20" y2="84.70" stroke="#f5c765" stroke-width="1.3"/>
<line x1="857.72" y1="90.22" x2="859.27" y2="91.77" stroke="#f5c765" stroke-width="1.3"/>
<line x1="852.20" y1="92.50" x2="852.20" y2="94.70" stroke="#f5c765" stroke-width="1.3"/>
<line x1="846.68" y1="90.22" x2="845.13" y2="91.77" stroke="#f5c765" stroke-width="1.3"/>
<line x1="844.40" y1="84.70" x2="842.20" y2="84.70" stroke="#f5c765" stroke-width="1.3"/>
<line x1="846.68" y1="79.18" x2="845.13" y2="77.63" stroke="#f5c765" stroke-width="1.3"/>
<line x1="852.20" y1="76.90" x2="852.20" y2="74.70" stroke="#f5c765" stroke-width="1.3"/>
<line x1="857.72" y1="79.18" x2="859.27" y2="77.63" stroke="#f5c765" stroke-width="1.3"/>
<rect x="868" y="83" width="14" height="10.7" fill="#f5c765"/><path d="M876.8 83 L876.8 79.5 A4.3 4.3 0 0 1 885.4 79.5 L885.4 82.5" fill="none" stroke="#f5c765" stroke-width="1.8"/><rect x="874.4" y="86" width="1.2" height="4" fill="#333"/>
<rect x="893.8" y="76.6" width="17.2" height="17.1" fill="#ffff00" stroke="#e8e8c0" stroke-width="0.8"/></svg>
<div class="t" style="left:917.6px;top:78.12px;font-size:14.5px;line-height:14.5px;color:#ececec;font-weight:400;font-family:'Liberation Sans',sans-serif;letter-spacing:0.309px;">parabola</div>
<div class="t" style="left:1086.5px;top:119.72px;font-size:14.5px;line-height:14.5px;color:#ececec;font-weight:400;font-family:'Liberation Sans',sans-serif;letter-spacing:-0.153px;">Insert</div>
<div class="t" style="left:1132.2px;top:119.72px;font-size:14.5px;line-height:14.5px;color:#ececec;font-weight:400;font-family:'Liberation Sans',sans-serif;letter-spacing:0.099px;">Detect</div>
<div class="t" style="left:1247.3px;top:121.62px;font-size:14.5px;line-height:14.5px;color:#ececec;font-weight:400;font-family:'Liberation Sans',sans-serif;letter-spacing:0.278px;">Match</div>
<div class="t" style="left:1234.4px;top:141.32px;font-size:14.5px;line-height:14.5px;color:#ececec;font-weight:400;font-family:'Liberation Sans',sans-serif;letter-spacing:0.001px;">Properties</div>
<svg width="1919" height="1018" viewBox="0 0 1919 1018"><path d="M1062.80 83.05 L1070.80 83.05 L1066.80 87.55 Z" fill="#dcdcdc"/>
<path d="M817.90 112.80 L824.70 106.00 L834.60 106.00 L827.80 112.80 Z" fill="#d9d9d9"/>
<circle cx="834.3" cy="115.6" r="3.8" fill="#5cc8d0"/><path d="M832.3 119 L836.3 119 L836.3 122 L834.3 123.5 L832.3 122 Z" fill="#f2f2f2"/>
<path d="M848.10 121.00 L855.20 113.70 L864.80 113.70 L857.70 121.00 Z" fill="#7ec4f0" stroke="#3b4453" stroke-width="0.8"/>
<path d="M848.10 116.90 L855.20 109.60 L864.80 109.60 L857.70 116.90 Z" fill="#d9d9d9" stroke="#3b4453" stroke-width="0.8"/>
<path d="M848.10 112.80 L855.20 105.50 L864.80 105.50 L857.70 112.80 Z" fill="#d9d9d9" stroke="#3b4453" stroke-width="0.8"/>
<path d="M866.5 110.5 L858 119" stroke="#f0f0f0" stroke-width="1.2"/><path d="M856.6 120.3 L857.5 115.5 L861.5 119.5 Z" fill="#f0f0f0"/>
<path d="M878.00 112.80 L884.80 106.00 L894.70 106.00 L887.90 112.80 Z" fill="#d9d9d9"/>
<g stroke="#5cc8d0" stroke-width="1.1"><line x1="891.5" y1="113" x2="891.5" y2="121.8"/><line x1="887.4" y1="115.2" x2="895.6" y2="119.6"/><line x1="887.4" y1="119.6" x2="895.6" y2="115.2"/></g>
<path d="M908.20 112.80 L915.00 106.00 L924.90 106.00 L918.10 112.80 Z" fill="#d9d9d9"/>
<rect x="918.4" y="116.5" width="9.6" height="8" fill="#5cc8d0"/><path d="M920.3 116.5 L920.3 113.8 A2.9 2.9 0 0 1 926.1 113.8 L926.1 116.5" fill="none" stroke="#5cc8d0" stroke-width="1.4"/><rect x="922.8" y="119" width="1" height="3" fill="#333"/>
<path d="M938.00 123.50 L945.10 116.20 L954.70 116.20 L947.60 123.50 Z" fill="#d9d9d9" stroke="#3b4453" stroke-width="0.8"/>
<path d="M938.00 119.40 L945.10 112.10 L954.70 112.10 L947.60 119.40 Z" fill="#d9d9d9" stroke="#3b4453" stroke-width="0.8"/>
<path d="M938.00 115.30 L945.10 108.00 L954.70 108.00 L947.60 115.30 Z" fill="#7ec4f0" stroke="#3b4453" stroke-width="0.8"/>
<circle cx="950.5" cy="109.3" r="3.5" fill="#cfcfcf"/>
<path d="M817.90 151.70 L825.00 144.40 L834.60 144.40 L827.50 151.70 Z" fill="#d9d9d9" stroke="#3b4453" stroke-width="0.8"/>
<path d="M817.90 147.60 L825.00 140.30 L834.60 140.30 L827.50 147.60 Z" fill="#d9d9d9" stroke="#3b4453" stroke-width="0.8"/>
<path d="M817.90 143.50 L825.00 136.20 L834.60 136.20 L827.50 143.50 Z" fill="#d9d9d9" stroke="#3b4453" stroke-width="0.8"/>
<circle cx="834.3" cy="148" r="4.2" fill="#f5c765"/><path d="M832.3 151.5 L836.3 151.5 L836.3 154 L834.3 155.6 L832.3 154 Z" fill="#f2f2f2"/>
<path d="M848.10 151.70 L855.20 144.40 L864.80 144.40 L857.70 151.70 Z" fill="#7ec4f0" stroke="#3b4453" stroke-width="0.8"/>
<path d="M848.10 147.60 L855.20 140.30 L864.80 140.30 L857.70 147.60 Z" fill="#d9d9d9" stroke="#3b4453" stroke-width="0.8"/>
<path d="M848.10 143.50 L855.20 136.20 L864.80 136.20 L857.70 143.50 Z" fill="#d9d9d9" stroke="#3b4453" stroke-width="0.8"/>
<path d="M858 155 L866 147" stroke="#f0f0f0" stroke-width="1.2"/><path d="M867 146 L866 151.2 L862 147.2 Z" fill="#f0f0f0"/>
<path d="M878.00 151.70 L885.10 144.40 L894.70 144.40 L887.60 151.70 Z" fill="#d9d9d9" stroke="#3b4453" stroke-width="0.8"/>
<path d="M878.00 147.60 L885.10 140.30 L894.70 140.30 L887.60 147.60 Z" fill="#d9d9d9" stroke="#3b4453" stroke-width="0.8"/>
<path d="M878.00 143.50 L885.10 136.20 L894.70 136.20 L887.60 143.50 Z" fill="#d9d9d9" stroke="#3b4453" stroke-width="0.8"/>
<circle cx="891.5" cy="149" r="3.6" fill="#f5c765"/>
<circle cx="897.10" cy="149.00" r="0.9" fill="#f5c765"/>
<circle cx="895.46" cy="152.96" r="0.9" fill="#f5c765"/>
<circle cx="891.50" cy="154.60" r="0.9" fill="#f5c765"/>
<circle cx="887.54" cy="152.96" r="0.9" fill="#f5c765"/>
<circle cx="885.90" cy="149.00" r="0.9" fill="#f5c765"/>
<circle cx="887.54" cy="145.04" r="0.9" fill="#f5c765"/>
<circle cx="891.50" cy="143.40" r="0.9" fill="#f5c765"/>
<circle cx="895.46" cy="145.04" r="0.9" fill="#f5c765"/>
<path d="M908.20 144.00 L915.00 137.20 L924.90 137.20 L918.10 144.00 Z" fill="#d9d9d9"/>
<rect x="915.5" y="148" width="9.6" height="7.6" fill="#f5c765"/><path d="M923 148 L923 145.2 A2.9 2.9 0 0 1 928.8 145.2 L928.8 147" fill="none" stroke="#f5c765" stroke-width="1.4"/><rect x="919.5" y="150.5" width="1" height="3" fill="#333"/>
<path d="M938.00 151.70 L945.10 144.40 L954.70 144.40 L947.60 151.70 Z" fill="#d9d9d9" stroke="#3b4453" stroke-width="0.8"/>
<path d="M938.00 147.60 L945.10 140.30 L954.70 140.30 L947.60 147.60 Z" fill="#d9d9d9" stroke="#3b4453" stroke-width="0.8"/>
<path d="M938.00 143.50 L945.10 136.20 L954.70 136.20 L947.60 143.50 Z" fill="#d9d9d9" stroke="#3b4453" stroke-width="0.8"/>
<path d="M947 150 L952.5 144.5 L957.5 149.5 L952 155 Z" fill="#f5c765"/><path d="M952.5 144.5 L955 142 L958 145 L957.5 149.5" fill="#f0f0f0"/>
<path d="M1102.2 71.1 L1118.5 71.1 L1123.9 76.5 L1123.9 101.5 L1102.2 101.5 Z" fill="#79c2f2"/>
<path d="M1118.5 71.1 L1118.5 76.5 L1123.9 76.5 Z" fill="#cde8fa"/>
<rect x="1085.5" y="84.2" width="25.5" height="18.8" fill="#707480" stroke="#c8c8c8" stroke-width="1.1"/>
<circle cx="1110" cy="102" r="8.5" fill="#707480" fill-opacity="0.85" stroke="#c8c8c8" stroke-width="1.1"/>
<rect x="1084" y="101" width="3.2" height="3.2" fill="#f0f0f0"/>
<path d="M1101.20 140.00 L1107.20 140.00 L1104.20 143.60 Z" fill="#dcdcdc"/>
<rect x="1144.2" y="73.4" width="24.9" height="20.3" fill="none" stroke="#d0d0d0" stroke-width="1.1"/>
<rect x="1136.3" y="80.3" width="25" height="24.9" fill="#414958" stroke="#d0d0d0" stroke-width="1.1"/>
<circle cx="1159" cy="97.9" r="9.3" fill="#3d6690" stroke="#e8e8e8" stroke-width="1.3"/>
<path d="M1159 89 L1159 97.9 L1167.8 97.9" fill="none" stroke="#79c2f2" stroke-width="1.1"/><path d="M1159 97.9 L1159 89.2 A8.7 8.7 0 0 1 1167.7 97.9 Z" fill="#2c4a6a"/>
<line x1="1165.8" y1="104.8" x2="1171.4" y2="110.8" stroke="#c9a86a" stroke-width="2"/>
<rect x="1184.8" y="79.8" width="12" height="9.5" fill="#6b6f7b" stroke="#c8c8c8" stroke-width="0.9"/>
<circle cx="1196.8" cy="89.3" r="4.6" fill="#6b6f7b" fill-opacity="0.8" stroke="#c8c8c8" stroke-width="0.9"/>
<rect x="1183.8" y="88.3" width="2" height="2" fill="#eee"/>
<path d="M1199.5 73.8 L1200.8 77.8 L1204.7 76.3 L1202 79.6 L1205 82.5 L1201 82 L1199.5 86 L1198.3 82 L1194.3 82.5 L1197.2 79.6 L1194.5 76.3 L1198.3 77.8 Z" fill="#f6d060"/>
<rect x="1184.8" y="110.7" width="12" height="9.5" fill="#6b6f7b" stroke="#c8c8c8" stroke-width="0.9"/>
<circle cx="1196.8" cy="120.2" r="4.6" fill="#6b6f7b" fill-opacity="0.8" stroke="#c8c8c8" stroke-width="0.9"/>
<rect x="1183.8" y="119.2" width="2" height="2" fill="#eee"/>
<path d="M1195 116 L1196 112.5 L1202.5 106.3 L1204.6 108.4 L1198.2 114.8 Z" fill="#f5c765"/><path d="M1202.5 106.3 L1203.6 105.2 L1205.7 107.3 L1204.6 108.4 Z" fill="#e66"/>
<path d="M1184.5 140 L1190 136.5 L1203 149.5 L1195.3 157.2 L1184.5 146.5 Z" fill="#d8d8d8"/>
<circle cx="1188" cy="140.8" r="1" fill="#555"/><path d="M1190 144 L1197 151" stroke="#777" stroke-width="0.8" stroke-dasharray="1.5 1"/>
<path d="M1193.5 147.5 L1194.5 144 L1201 137.8 L1203.1 139.9 L1196.7 146.3 Z" fill="#f5c765"/><path d="M1201 137.8 L1202.1 136.7 L1204.2 138.8 L1203.1 139.9 Z" fill="#e66"/>
<path d="M1214.20 145.00 L1220.20 145.00 L1217.20 148.60 Z" fill="#dcdcdc"/>
<rect x="1249.4" y="73.8" width="25.4" height="35.1" fill="#dcdcdc"/>
<rect x="1252.2" y="76.2" width="17.5" height="13.3" fill="#79c2f2" stroke="#2a3340" stroke-width="1"/>
<path d="M1254 95.5 L1268 95.5 M1254 102.5 L1266 102.5" stroke="#666" stroke-width="0.9"/><rect x="1256" y="93.5" width="1.6" height="4" fill="#444"/><rect x="1264.5" y="100.5" width="1.6" height="4" fill="#444"/>
<path d="M1268.5 102 L1274.5 96 L1284 105.5 L1278 111.5 Z" fill="#f5c765" stroke="#3b4453" stroke-width="0.7"/>
<path d="M1274.5 96 L1279 91.5 L1282 94.5 L1285 91.5 L1287.5 94 L1284.5 97 L1288 100.5 L1284 105.5 Z" fill="#efefef" stroke="#3b4453" stroke-width="0.7"/>
<path d="M1317.9 85.9 L1317.90 75.90 A10 10 0 0 1 1326.56 80.90 Z" fill="#f6c23e"/>
<path d="M1317.9 85.9 L1326.56 80.90 A10 10 0 0 1 1326.56 90.90 Z" fill="#f5892f"/>
<path d="M1317.9 85.9 L1326.56 90.90 A10 10 0 0 1 1317.90 95.90 Z" fill="#e9483f"/>
<path d="M1317.9 85.9 L1317.90 95.90 A10 10 0 0 1 1309.24 90.90 Z" fill="#8c4de0"/>
<path d="M1317.9 85.9 L1309.24 90.90 A10 10 0 0 1 1309.24 80.90 Z" fill="#2fa6e0"/>
<path d="M1317.9 85.9 L1309.24 80.90 A10 10 0 0 1 1317.90 75.90 Z" fill="#45c05a"/>
<rect x="1308" y="106.0" width="19.9" height="1.2" fill="#dcdcdc"/>
<rect x="1308" y="109.1" width="19.9" height="2.4" fill="#dcdcdc"/>
<rect x="1308" y="114.2" width="19.9" height="3.4" fill="#dcdcdc"/>
<rect x="1308" y="121.14999999999999" width="19.9" height="4.3" fill="#dcdcdc"/>
<line x1="1308" y1="138.5" x2="1327.5" y2="138.5" stroke="#cfcfcf" stroke-width="1.6" stroke-dasharray="1.5 2"/>
<line x1="1308" y1="142.2" x2="1327.5" y2="142.2" stroke="#cfcfcf" stroke-width="1.6" stroke-dasharray="3 1.5"/>
<line x1="1308" y1="145.4" x2="1327.5" y2="145.4" stroke="#cfcfcf" stroke-width="1.6"/>
<line x1="1308" y1="148.6" x2="1327.5" y2="148.6" stroke="#cfcfcf" stroke-width="1.6" stroke-dasharray="3.5 1.5"/>
<line x1="1308" y1="152.3" x2="1327.5" y2="152.3" stroke="#cfcfcf" stroke-width="1.6" stroke-dasharray="6 1"/>
<rect x="1331.5" y="72.6" width="169.5" height="25.200000000000003" fill="#4a5262" stroke="#2b313b" stroke-width="1"/>
<rect x="1331.5" y="103" width="169.5" height="25.80000000000001" fill="#4a5262" stroke="#2b313b" stroke-width="1"/>
<rect x="1331.5" y="133" width="169.5" height="26" fill="#4a5262" stroke="#2b313b" stroke-width="1"/>
<rect x="1338.8" y="76" width="20.2" height="19.5" fill="#ffff00" stroke="#e8e8c0" stroke-width="0.8"/></svg>
<div class="t" style="left:1364.7px;top:79.82px;font-size:14.5px;line-height:14.5px;color:#ececec;font-weight:400;font-family:'Liberation Sans',sans-serif;letter-spacing:-0.449px;">ByLayer</div>
<div class="t" style="left:1422.5px;top:109.62px;font-size:14.5px;line-height:14.5px;color:#ececec;font-weight:400;font-family:'Liberation Sans',sans-serif;letter-spacing:-0.449px;">ByLayer</div>
<div class="t" style="left:1422.5px;top:140.12px;font-size:14.5px;line-height:14.5px;color:#ececec;font-weight:400;font-family:'Liberation Sans',sans-serif;letter-spacing:-0.449px;">ByLayer</div>
<div class="t" style="left:1510.9px;top:120.82px;font-size:14.5px;line-height:14.5px;color:#ececec;font-weight:400;font-family:'Liberation Sans',sans-serif;letter-spacing:0.025px;">Group</div>
<div class="t" style="left:1607.8px;top:120.82px;font-size:14.5px;line-height:14.5px;color:#ececec;font-weight:400;font-family:'Liberation Sans',sans-serif;letter-spacing:-0.253px;">Measure</div>
<div class="t" style="left:1728.8px;top:121.72px;font-size:14.5px;line-height:14.5px;color:#ececec;font-weight:400;font-family:'Liberation Sans',sans-serif;letter-spacing:-1.020px;">Paste</div>
<div class="t" style="left:1848.7px;top:121.72px;font-size:14.5px;line-height:14.5px;color:#ececec;font-weight:400;font-family:'Liberation Sans',sans-serif;letter-spacing:-1.017px;">Base</div>
<svg width="1919" height="1018" viewBox="0 0 1919 1018"><path d="M1490.30 84.15 L1498.30 84.15 L1494.30 88.65 Z" fill="#dcdcdc"/>
<line x1="1340" y1="115.5" x2="1419.8" y2="115.5" stroke="#e0e0e0" stroke-width="1.2"/>
<path d="M1490.30 113.95 L1498.30 113.95 L1494.30 118.45 Z" fill="#dcdcdc"/>
<line x1="1340" y1="146.5" x2="1419.8" y2="146.5" stroke="#e0e0e0" stroke-width="1.2"/>
<path d="M1490.30 144.25 L1498.30 144.25 L1494.30 148.75 Z" fill="#dcdcdc"/>
<path d="M1517.6 79.8 L1513.3 79.8 L1513.3 112.5 L1517.6 112.5 M1535.2 112.5 L1539.6 112.5 L1539.6 94.4" fill="none" stroke="#e0e0e0" stroke-width="1.2"/>
<rect x="1520.3" y="84.3" width="12.7" height="9.2" fill="#4e7ea8" stroke="#79c2f2" stroke-width="0.9"/>
<circle cx="1526.4" cy="103.5" r="6.4" fill="#6f737c" stroke="#9a9ea6" stroke-width="0.8"/>
<path d="M1541.00 74.00 L1542.76 79.25 L1547.72 76.78 L1545.25 81.74 L1550.50 83.50 L1545.25 85.26 L1547.72 90.22 L1542.76 87.75 L1541.00 93.00 L1539.24 87.75 L1534.28 90.22 L1536.75 85.26 L1531.50 83.50 L1536.75 81.74 L1534.28 76.78 L1539.24 79.25 Z" fill="#f6d06a"/>
<path d="M1575.6 74.3 L1578.8 74.3 L1578.8 94 L1575.6 94" fill="none" stroke="#d8d8d8" stroke-width="1.1"/>
<rect x="1563.3" y="75" width="8.5" height="6.8" fill="#4e7ea8" stroke="#79c2f2" stroke-width="0.8"/><circle cx="1567.4" cy="87.5" r="3.8" fill="#6f737c" stroke="#9a9ea6" stroke-width="0.7"/>
<path d="M1573.5 81.5 L1580 88 M1580 81.5 L1573.5 88" stroke="#ef5a62" stroke-width="2"/>
<path d="M1564 105 L1561.4 105 L1561.4 121.8 L1564 121.8 M1574.5 105 L1577 105 L1577 116" fill="none" stroke="#d8d8d8" stroke-width="1.1"/>
<rect x="1565" y="106.3" width="7.2" height="5.8" fill="#4e7ea8" stroke="#79c2f2" stroke-width="0.8"/><circle cx="1568.6" cy="116.8" r="3.2" fill="#6f737c" stroke="#9a9ea6" stroke-width="0.7"/>
<path d="M1571.5 124.5 L1572.2 121.4 L1578.6 115 L1580.8 117.2 L1574.4 123.6 Z" fill="#f5c765"/><path d="M1578.6 115 L1579.7 113.9 L1581.9 116.1 L1580.8 117.2 Z" fill="#e66"/>
<rect x="1557.2" y="133.3" width="28.3" height="26.4" fill="#45586d" stroke="#5aa8e0" stroke-width="1.1"/>
<path d="M1563.4 136.6 L1561 136.6 L1561 152.8 L1563.4 152.8 M1572.5 136.6 L1574.8 136.6 L1574.8 141" fill="none" stroke="#c8c8c8" stroke-width="1.1"/>
<rect x="1565" y="138.3" width="5.6" height="4.8" fill="#3d8a55" stroke="#5fcf7a" stroke-width="0.8"/><circle cx="1567.7" cy="148.2" r="2.8" fill="#3d8a55" stroke="#5fcf7a" stroke-width="0.8"/>
<path d="M1573.3 144.3 L1573.3 155 L1575.8 152.6 L1577.8 156.6 L1579.6 155.7 L1577.6 151.8 L1580.8 151.6 Z" fill="#f4f4f4"/>
<rect x="1617" y="88.9" width="35.5" height="7.7" fill="#f5c86a"/>
<rect x="1619.00" y="88.9" width="0.9" height="2.8" fill="#6b5a30"/>
<rect x="1622.20" y="88.9" width="0.9" height="1.8" fill="#6b5a30"/>
<rect x="1625.40" y="88.9" width="0.9" height="2.8" fill="#6b5a30"/>
<rect x="1628.60" y="88.9" width="0.9" height="1.8" fill="#6b5a30"/>
<rect x="1631.80" y="88.9" width="0.9" height="2.8" fill="#6b5a30"/>
<rect x="1635.00" y="88.9" width="0.9" height="1.8" fill="#6b5a30"/>
<rect x="1638.20" y="88.9" width="0.9" height="2.8" fill="#6b5a30"/>
<rect x="1641.40" y="88.9" width="0.9" height="1.8" fill="#6b5a30"/>
<rect x="1644.60" y="88.9" width="0.9" height="2.8" fill="#6b5a30"/>
<rect x="1647.80" y="88.9" width="0.9" height="1.8" fill="#6b5a30"/>
<rect x="1651.00" y="88.9" width="0.9" height="2.8" fill="#6b5a30"/>
<path d="M1632.50 140.80 L1638.50 140.80 L1635.50 144.40 Z" fill="#dcdcdc"/>
<rect x="1690.5" y="82" width="11.6" height="12.2" fill="#e8f2fb"/><path d="M1693 85.5 L1700 85.5 M1693 88.2 L1700 88.2 M1693 91 L1700 91" stroke="#5aa0d8" stroke-width="1"/>
<path d="M1690.5 74.3 L1684 80.3 L1688.5 80.8 L1686.5 84.5 L1693.3 78.5 L1689 78 Z" fill="#f6d06a"/>
<path d="M1682 79.5 L1682 93 L1685.3 89.8 L1687.8 94.6 L1690 93.5 L1687.6 88.8 L1691.8 88.5 Z" fill="#f4f4f4"/>
<rect x="1682.3" y="105.3" width="18.3" height="18.3" fill="none" stroke="#5fcf7a" stroke-width="0.9" stroke-dasharray="2 1"/>
<path d="M1688 108 L1699 108 L1699 119 L1692.5 119 L1692.5 113 L1688 113 Z" fill="#6dcf8a"/><path d="M1684.5 113 L1692.5 113 L1692.5 122 L1684.5 122 Z" fill="#58b874"/>
<path d="M1695 114.5 L1695 126 L1697.9 123.2 L1700 127.5 L1702 126.5 L1699.8 122.4 L1703.6 122 Z" fill="#f4f4f4"/>
<rect x="1684.2" y="136" width="14.5" height="20" fill="#d6d6d6"/><rect x="1686" y="138" width="11" height="3.2" fill="#6a6f78"/>
<rect x="1686.30" y="143.30" width="2.6" height="2.6" fill="#6a6f78"/>
<rect x="1690.00" y="143.30" width="2.6" height="2.6" fill="#6a6f78"/>
<rect x="1693.70" y="143.30" width="2.6" height="2.6" fill="#6a6f78"/>
<rect x="1686.30" y="147.10" width="2.6" height="2.6" fill="#6a6f78"/>
<rect x="1690.00" y="147.10" width="2.6" height="2.6" fill="#6a6f78"/>
<rect x="1693.70" y="147.10" width="2.6" height="2.6" fill="#6a6f78"/>
<rect x="1686.30" y="150.90" width="2.6" height="2.6" fill="#6a6f78"/>
<rect x="1690.00" y="150.90" width="2.6" height="2.6" fill="#6a6f78"/>
<rect x="1693.70" y="150.90" width="2.6" height="2.6" fill="#6a6f78"/>
<rect x="1728.8" y="77.7" width="28.2" height="31.3" fill="#deae6c"/>
<path d="M1735.7 79.3 L1735.7 77 Q1737 75.3 1740 75.3 L1740.5 73.8 L1744.3 73.8 L1744.8 75.3 Q1748 75.3 1749 77 L1749 79.3 Z" fill="#f4f4f4"/>
<path d="M1737.8 86.2 L1752.5 86.2 L1761.2 94.4 L1761.2 113.8 L1737.8 113.8 Z" fill="#dcdcdc" stroke="#3b4453" stroke-width="0.8"/>
<path d="M1752.5 86.2 L1752.5 94.4 L1761.2 94.4 Z" fill="#f4f4f4"/>
<path d="M1742.00 141.70 L1748.00 141.70 L1745.00 145.30 Z" fill="#dcdcdc"/>
<rect x="1781" y="75" width="14.5" height="17" fill="#d8d8d8"/><path d="M1783 79 L1792 79 M1783 82.5 L1790 82.5 M1783 86 L1788 86" stroke="#8a8a8a" stroke-width="0.9"/>
<path d="M1790 79.5 L1797 89.5 M1800.5 80 L1793.5 89.5" stroke="#f0f0f0" stroke-width="1.3"/><circle cx="1793.2" cy="92" r="1.9" fill="none" stroke="#f0f0f0" stroke-width="1.1"/><circle cx="1797.6" cy="92" r="1.9" fill="none" stroke="#f0f0f0" stroke-width="1.1"/>
<path d="M1808.50 84.10 L1814.50 84.10 L1811.50 87.70 Z" fill="#dcdcdc"/>
<path d="M1783 105.9 L1794 105.9 L1794 122 L1783 122 Z" fill="#cfcfcf"/>
<path d="M1787 108.5 L1795.5 108.5 L1799 112 L1799 126 L1787 126 Z" fill="#dcdcdc" stroke="#3b4453" stroke-width="0.8"/>
<path d="M1808.50 115.00 L1814.50 115.00 L1811.50 118.60 Z" fill="#dcdcdc"/>
<path d="M1843 77.7 L1860 77.7 L1860 91 L1883 91 L1883 108 L1843 108 Z" fill="#dcdcdc"/>
<path d="M1860.00 141.70 L1866.00 141.70 L1863.00 145.30 Z" fill="#dcdcdc"/></svg>
<div style="left:20.3px;top:198.60000000000002px;width:20.1px;height:2.4px;background:#e0e0e0;"></div>
<div style="left:20.3px;top:205.70000000000002px;width:20.1px;height:2.4px;background:#e0e0e0;"></div>
<div style="left:20.3px;top:212.8px;width:20.1px;height:2.4px;background:#e0e0e0;"></div>
<div class="t" style="left:72.4px;top:201.42px;font-size:14.5px;line-height:14.5px;color:#e2e2e2;font-weight:400;font-family:'Liberation Sans',sans-serif;letter-spacing:-0.031px;">Start</div>
<div class="t" style="left:133.4px;top:201.42px;font-size:14.5px;line-height:14.5px;color:#e2e2e2;font-weight:400;font-family:'Liberation Sans',sans-serif;letter-spacing:0.180px;">figuras</div>
<div class="t" style="left:222.8px;top:201.42px;font-size:14.5px;line-height:14.5px;color:#e2e2e2;font-weight:400;font-family:'Liberation Sans',sans-serif;letter-spacing:0.294px;">solidos</div>
<svg width="1919" height="1018" viewBox="0 0 1919 1018"><line x1="53.4" y1="217.6" x2="61.2" y2="196.7" stroke="#59606c" stroke-width="1.1"/>
<line x1="114.6" y1="217.6" x2="122.5" y2="196.7" stroke="#59606c" stroke-width="1.1"/>
<line x1="204.5" y1="217.6" x2="212.3" y2="196.7" stroke="#59606c" stroke-width="1.1"/>
<line x1="468.5" y1="217.6" x2="475.5" y2="196.7" stroke="#59606c" stroke-width="1.1"/>
<path d="M294.6 222 L307.6 192 L425.8 192 L414.4 222 Z" fill="#3b4453"/></svg>
<div class="t" style="left:315.3px;top:201.42px;font-size:14.5px;line-height:14.5px;color:#f4f4f4;font-weight:700;font-family:'Liberation Sans',sans-serif;letter-spacing:0.412px;">Drawing2*</div>
<div class="t" style="left:3.8px;top:236.32px;font-size:14.5px;line-height:14.5px;color:#d8dadd;font-weight:400;font-family:'Liberation Sans',sans-serif;letter-spacing:1.088px;">[−]</div>
<div class="t" style="left:25.6px;top:236.32px;font-size:14.5px;line-height:14.5px;color:#d8dadd;font-weight:400;font-family:'Liberation Sans',sans-serif;letter-spacing:0.123px;">[Custom View][2D Wireframe]</div>
<div style="left:1846px;top:246.5px;width:11.5px;height:3px;background:#e8e8e8;"></div>
<svg width="1919" height="1018" viewBox="0 0 1919 1018"><path d="M401.5 202.2 L411 211.8 M411 202.2 L401.5 211.8" stroke="#b8bcc4" stroke-width="2"/>
<path d="M446.8 199.3 L446.8 215.7 M438.6 207.5 L455 207.5" stroke="#e4e4e4" stroke-width="2.2"/>
<path d="M1873.5 240 L1882.5 240 L1882.5 248" fill="none" stroke="#e8e8e8" stroke-width="1.3"/><rect x="1871.6" y="242.6" width="8" height="8" fill="none" stroke="#e8e8e8" stroke-width="2.6"/>
<path d="M1897.5 241.5 L1905 249.5 M1905 241.5 L1897.5 249.5" stroke="#e8e8e8" stroke-width="2.4"/>
<defs><radialGradient id="vcg" cx="50%" cy="50%" r="50%"><stop offset="0" stop-color="#2a313b" stop-opacity="0.9"/><stop offset="1" stop-color="#212830" stop-opacity="0"/></radialGradient></defs>
<ellipse cx="1832" cy="379" rx="53" ry="23" fill="#1d232b"/>
<path d="M1764.5 379 A67.5 34 0 0 0 1899.5 379 A67.5 34 0 0 0 1764.5 379 Z M1779.5 379 A52.5 23.5 0 0 1 1884.5 379 A52.5 23.5 0 0 1 1779.5 379 Z" fill="#474e59" fill-rule="evenodd"/>
<g font-family="Liberation Sans" font-weight="700" fill="#cdd0d4" font-size="18" text-anchor="middle" stroke="#cdd0d4" stroke-width="0.6"><text x="0" y="6.5" transform="translate(1781 397) rotate(-35) scale(1 0.8)">S</text><text x="0" y="6.5" transform="translate(1884 397) rotate(33) scale(1 0.8)">E</text><text x="0" y="6.5" transform="translate(1789 345) rotate(30) scale(1 0.8)">W</text><text x="0" y="6.5" transform="translate(1876 347) rotate(-28) scale(1 0.8)">N</text></g>
<path d="M1805.5 308.5 L1873.2 329.6 L1857.9 377.5 L1824.7 376.8 L1790.9 355.8 Z" fill="#c6c7cb"/>
<path d="M1842.6 324.5 L1873.2 329.6 L1857.9 377.5 L1826 375.6 Z" fill="#bcbdc2"/>
<path d="M1805.5 308.5 L1842.6 324.5 L1873.2 329.6" fill="none" stroke="#8d9096" stroke-width="0.8" stroke-dasharray="2 1.5"/>
<path d="M1842.6 324.5 L1826 375.6" fill="none" stroke="#6d7076" stroke-width="0.9" stroke-dasharray="4 2"/>
<text x="0" y="4" text-anchor="middle" font-family="Liberation Sans" font-weight="700" font-size="11.5" fill="#66696f" transform="translate(1814.5 340.4) rotate(-72)">TOP</text>
<text x="0" y="4" text-anchor="middle" font-family="Liberation Sans" font-weight="700" font-size="10.5" fill="#66696f" transform="translate(1850.2 351.3) rotate(-72)">FRONT</text>
<rect x="1791.6" y="436" width="81" height="20" rx="4" fill="#9a9ea6"/>
<rect x="1792.6" y="437" width="79" height="18" rx="3.5" fill="#8f939b"/></svg>
<div class="t" style="left:1796.5px;top:440.42px;font-size:12.5px;line-height:12.5px;color:#5e6269;font-weight:400;font-family:'Liberation Sans',sans-serif;letter-spacing:0.133px;">Unnamed</div>
<div class="t" style="left:233.8px;top:878.59px;font-size:14.9px;line-height:14.9px;color:#2b323c;font-weight:400;font-family:'Liberation Mono',monospace;">Select objects:</div>
<div class="t" style="left:233.8px;top:903.29px;font-size:14.9px;line-height:14.9px;color:#2b323c;font-weight:400;font-family:'Liberation Mono',monospace;">Specify first point on Section plane by [Object/Zaxis/View/XY/YZ/ZX/3points] &lt;3points&gt;:</div>
<div class="t" style="left:233.8px;top:925.09px;font-size:14.9px;line-height:14.9px;color:#2b323c;font-weight:400;font-family:'Liberation Mono',monospace;">Specify a point on the XY-plane &lt;0,0,0&gt;: 0,0,8.5</div>
<svg width="1919" height="1018" viewBox="0 0 1919 1018"><path d="M1856 443.5 L1866 443.5 L1861 448 Z" fill="#a9adb4"/>
<rect x="1877" y="486" width="40" height="259" rx="4" fill="#4b525d" stroke="#5a616c" stroke-width="1"/>
<circle cx="1909" cy="492.5" r="4" fill="none" stroke="#3c424c" stroke-width="1"/>
<path d="M1888 520 A10 10 0 1 0 1908 520 L1908 508 L1898 508 A10 10 0 0 0 1888 520" fill="none" stroke="#3c424c" stroke-width="1.5"/><circle cx="1898" cy="519" r="5" fill="none" stroke="#3c424c" stroke-width="1.3"/>
<path d="M1895.00 543.50 L1900.00 543.50 L1897.50 546.50 Z" fill="#3c424c"/>
<line x1="1880" y1="554.5" x2="1914" y2="554.5" stroke="#555c66" stroke-width="1"/>
<path d="M1885 575 Q1890 582 1895 586 L1905 586 Q1910 578 1910 568 L1910 562 Q1908 559 1906 562 L1906 570 L1905 557 Q1903 554 1901 557 L1901 568 L1900 555 Q1898 552 1896 555 L1896 568 L1894 558 Q1892 556 1890 558 L1891 574 Q1888 570 1885 572 Z" fill="none" stroke="#3c424c" stroke-width="1.3"/>
<path d="M1884 597 L1896 609 M1884 621 L1894 611 M1898 597 L1890 605" stroke="#3c424c" stroke-width="1.2"/><circle cx="1900" cy="614" r="5" fill="none" stroke="#3c424c" stroke-width="1.5"/><line x1="1904" y1="618" x2="1909" y2="623" stroke="#3c424c" stroke-width="2.5"/>
<path d="M1895.00 632.00 L1900.00 632.00 L1897.50 635.00 Z" fill="#3c424c"/>
<path d="M1897 642 L1892 650 L1895 650 L1895 668 L1899 668 L1899 650 L1902 650 Z" fill="none" stroke="#3c424c" stroke-width="1.3"/><ellipse cx="1897" cy="660" rx="11" ry="4" fill="none" stroke="#3c424c" stroke-width="1.3"/>
<path d="M1895.00 677.50 L1900.00 677.50 L1897.50 680.50 Z" fill="#3c424c"/>
<rect x="1884" y="695" width="7" height="8" fill="none" stroke="#3c424c" stroke-width="1.2"/><rect x="1893" y="695" width="7" height="8" fill="none" stroke="#3c424c" stroke-width="1.2"/><rect x="1902" y="695" width="7" height="8" fill="none" stroke="#3c424c" stroke-width="1.2"/>
<rect x="1884" y="706" width="18" height="16" fill="none" stroke="#3c424c" stroke-width="1.2"/><path d="M1889 709 L1897 714 L1889 719 Z" fill="#3c424c"/>
<circle cx="1909" cy="738" r="4" fill="none" stroke="#3c424c" stroke-width="1"/></svg>
<svg width="1919" height="1018" viewBox="0 0 1919 1018"><line x1="0" y1="389" x2="1198.3" y2="978.4" stroke="#e8e838" stroke-width="1.4"/>
<ellipse cx="948.4" cy="352" rx="121.2" ry="59.6" fill="none" stroke="#e4e6ea" stroke-width="1.3"/>
<ellipse cx="948.7" cy="771.5" rx="121.1" ry="59.2" fill="none" stroke="#e4e6ea" stroke-width="1.3"/>
<line x1="863" y1="310" x2="1033.6" y2="813.5" stroke="#e4e6ea" stroke-width="1.3"/>
<line x1="1033.6" y1="310" x2="863.6" y2="813.5" stroke="#e4e6ea" stroke-width="1.3"/>
<line x1="863.6" y1="395" x2="1033.6" y2="728" stroke="#e4e6ea" stroke-width="1.3"/>
<line x1="1033.6" y1="395" x2="863.6" y2="728" stroke="#e4e6ea" stroke-width="1.3"/>
<ellipse cx="948.5" cy="666.2" rx="60.8" ry="30" fill="none" stroke="#ac1a20" stroke-width="2.1"/>
<path d="M833.7 752.6 Q1034.7 426.1 986.7 827.7" fill="none" stroke="#e8e838" stroke-width="1.4"/>
<line x1="833.7" y1="752.6" x2="986.7" y2="828.2" stroke="#e8e838" stroke-width="1.4"/>
<path d="M888 740 L902.5 754 M902.5 740 L888 754" stroke="#e4e6ea" stroke-width="1.3"/>
<path d="M821 772.5 L827.7 779.5 L834.8 772.7 M827.7 779.5 L827.7 787" stroke="#e4e6ea" stroke-width="1.3" fill="none"/>
<path d="M829 792.5 L843 792.5 L829 807 L843 807" stroke="#e4e6ea" stroke-width="1.3" fill="none"/>
<line x1="824" y1="808.4" x2="862.5" y2="813.7" stroke="#e4e6ea" stroke-width="1.3"/></svg>
<div style="left:153px;top:946.5px;width:72px;height:32px;background:#262c37;"></div>
<svg width="1919" height="1018" viewBox="0 0 1919 1018"><rect x="224.7" y="947" width="1541" height="31.7" rx="3.5" fill="#e6e8eb" fill-opacity="0.82"/>
<rect x="158" y="951.9" width="2" height="2" fill="#d8d8d8"/>
<rect x="158" y="955.8" width="2" height="2" fill="#d8d8d8"/>
<rect x="158" y="959.7" width="2" height="2" fill="#d8d8d8"/>
<rect x="158" y="963.2" width="2" height="2" fill="#d8d8d8"/>
<rect x="158" y="967" width="2" height="2" fill="#d8d8d8"/>
<rect x="158" y="971" width="2" height="2" fill="#d8d8d8"/>
<rect x="161.9" y="951.9" width="2" height="2" fill="#d8d8d8"/>
<rect x="161.9" y="955.8" width="2" height="2" fill="#d8d8d8"/>
<rect x="161.9" y="959.7" width="2" height="2" fill="#d8d8d8"/>
<rect x="161.9" y="963.2" width="2" height="2" fill="#d8d8d8"/>
<rect x="161.9" y="967" width="2" height="2" fill="#d8d8d8"/>
<rect x="161.9" y="971" width="2" height="2" fill="#d8d8d8"/>
<path d="M174 957 L184 967 M184 957 L174 967" stroke="#c8c8c8" stroke-width="2"/>
<path d="M201.5 969.5 L209.5 961.5" stroke="#bdbdbd" stroke-width="2.8" stroke-linecap="round"/>
<path d="M214.8 953.6 A5.2 5.2 0 1 0 218.6 957.4 L215.5 958.8 L213.6 956.9 Z" fill="#bdbdbd"/>
<rect x="230.6" y="955.7" width="18.6" height="13.6" fill="none" stroke="#5a5a5a" stroke-width="1.1"/><rect x="230.6" y="955.7" width="18.6" height="2.6" fill="#5a5a5a"/>
<path d="M233 961 L236.5 963 L233 965 M237.5 967 L242 967" fill="none" stroke="#5a5a5a" stroke-width="0.9"/>
<path d="M252.80 961.05 L261.80 961.05 L257.30 965.75 Z" fill="#5a5a5a"/></svg>
<div class="t" style="left:271.5px;top:956.89px;font-size:14.9px;line-height:14.9px;color:#6e7074;font-weight:400;font-family:'Liberation Mono',monospace;font-style:italic;">Type a command</div>
<div style="left:0px;top:978.7px;width:1919px;height:1px;background:#2a303a;"></div>
<div style="left:19.8px;top:990.3000000000001px;width:20.4px;height:2.6px;background:#e4e4e4;"></div>
<div style="left:19.8px;top:998.0px;width:20.4px;height:2.6px;background:#e4e4e4;"></div>
<div style="left:19.8px;top:1005.7px;width:20.4px;height:2.6px;background:#e4e4e4;"></div>
<svg width="1919" height="1018" viewBox="0 0 1919 1018"><path d="M1750.5 966.5 L1755.5 961 L1760.5 966.5 Z" fill="#5a5c60"/>
<path d="M51.7 1013.5 L61.5 984.5 L136.5 984.5 L126 1013.5 Z" fill="#3b4453"/></svg>
<div class="t" style="left:71.9px;top:993.32px;font-size:14.5px;line-height:14.5px;color:#f4f4f4;font-weight:700;font-family:'Liberation Sans',sans-serif;letter-spacing:0.453px;">Model</div>
<div class="t" style="left:145.8px;top:993.32px;font-size:14.5px;line-height:14.5px;color:#e6e6e6;font-weight:400;font-family:'Liberation Sans',sans-serif;letter-spacing:-0.083px;">Layout1</div>
<div class="t" style="left:228px;top:993.32px;font-size:14.5px;line-height:14.5px;color:#e6e6e6;font-weight:400;font-family:'Liberation Sans',sans-serif;letter-spacing:-0.100px;">Layout2</div>
<div style="left:1206.7px;top:985.6px;width:59.299999999999955px;height:32.4px;background:#363d4a;"></div>
<div style="left:1269.2px;top:985.6px;width:79.79999999999995px;height:32.4px;background:#363d4a;"></div>
<div style="left:1352px;top:985.6px;width:29.700000000000045px;height:32.4px;background:#363d4a;"></div>
<div style="left:1382.9px;top:985.6px;width:130.0999999999999px;height:32.4px;background:#363d4a;"></div>
<div style="left:1514.2px;top:985.6px;width:79.79999999999995px;height:32.4px;background:#363d4a;"></div>
<div style="left:1597px;top:985.6px;width:132.29999999999995px;height:32.4px;background:#363d4a;"></div>
<div style="left:1732.2px;top:985.6px;width:49.899999999999864px;height:32.4px;background:#363d4a;"></div>
<div style="left:1782.9px;top:985.6px;width:30.09999999999991px;height:32.4px;background:#363d4a;"></div>
<div style="left:1815.9px;top:985.6px;width:30.09999999999991px;height:32.4px;background:#363d4a;"></div>
<div style="left:1849.2px;top:985.6px;width:3.599999999999909px;height:32.4px;background:#363d4a;"></div>
<div style="left:1855.7px;top:985.6px;width:30.5px;height:32.4px;background:#363d4a;"></div>
<div style="left:1888px;top:985.6px;width:30px;height:32.4px;background:#363d4a;"></div>
<div style="left:1413.8px;top:987.8px;width:28.100000000000136px;height:30.2px;background:#5b8fc4;"></div>
<div style="left:1545.1px;top:987.8px;width:28.100000000000136px;height:30.2px;background:#5b8fc4;"></div>
<div style="left:1597.8px;top:987.8px;width:28.299999999999955px;height:30.2px;background:#5b8fc4;"></div>
<svg width="1919" height="1018" viewBox="0 0 1919 1018"><line x1="208" y1="1012" x2="216.7" y2="990.5" stroke="#59606c" stroke-width="1.1"/>
<line x1="290.6" y1="1012" x2="299" y2="990.5" stroke="#59606c" stroke-width="1.1"/>
<line x1="342.7" y1="1012" x2="351" y2="990.5" stroke="#59606c" stroke-width="1.1"/>
<path d="M321.9 990.5 L321.9 1007.7 M312.5 999.3 L331.3 999.3" stroke="#e4e4e4" stroke-width="2.4"/></svg>
<div class="t" style="left:1211.4px;top:994.92px;font-size:15.8px;line-height:15.8px;color:#ececec;font-weight:400;font-family:'Liberation Sans',sans-serif;letter-spacing:-1.422px;">MODEL</div>
<svg width="1919" height="1018" viewBox="0 0 1919 1018"><path d="M1277.5 992.2 L1277.5 1011 M1283.5 992.2 L1283.5 1011 M1289.5 992.2 L1289.5 1011 M1273.9 995.8 L1293.1 995.8 M1273.9 1001.6 L1293.1 1001.6 M1273.9 1007.4 L1293.1 1007.4" stroke="#e0e0e0" stroke-width="1.3"/>
<rect x="1306.0" y="994.3" width="2.8" height="2.8" fill="#e0e0e0"/>
<rect x="1312.0" y="994.3" width="2.8" height="2.8" fill="#e0e0e0"/>
<rect x="1318.0" y="994.3" width="2.8" height="2.8" fill="#e0e0e0"/>
<rect x="1306.0" y="1000.3" width="2.8" height="2.8" fill="#e0e0e0"/>
<rect x="1312.0" y="1000.3" width="2.8" height="2.8" fill="#e0e0e0"/>
<rect x="1318.0" y="1000.3" width="2.8" height="2.8" fill="#e0e0e0"/>
<rect x="1306.0" y="1006.3" width="2.8" height="2.8" fill="#e0e0e0"/>
<rect x="1312.0" y="1006.3" width="2.8" height="2.8" fill="#e0e0e0"/>
<rect x="1318.0" y="1006.3" width="2.8" height="2.8" fill="#e0e0e0"/>
<path d="M1333.80 999.00 L1343.60 999.00 L1338.70 1003.60 Z" fill="#dcdcdc"/>
<path d="M1360.5 995 L1360.5 1003.5 M1356.5 999.2 L1364.5 999.2" stroke="#e0e0e0" stroke-width="1.3"/><rect x="1364.5" y="1004.5" width="12.5" height="5" fill="#e0e0e0"/><rect x="1365.5" y="1005.5" width="1.8" height="3" fill="#555"/>
<path d="M1388 992 L1388 1011 L1408.1 1011 M1388.5 1006 L1393 1006 L1393 1010.5" fill="none" stroke="#e0e0e0" stroke-width="1.1"/>
<circle cx="1425.9" cy="1002" r="7.8" fill="none" stroke="#f2f2f2" stroke-width="1.2"/><path d="M1425.5 1001.8 L1432.5 994 M1425.5 1001.8 L1437.5 1001.8" stroke="#f2f2f2" stroke-width="1.2"/>
<path d="M1447.65 998.90 L1457.95 998.90 L1452.80 1003.90 Z" fill="#dcdcdc"/>
<line x1="1478.4" y1="992" x2="1478.4" y2="1009.8" stroke="#5fcf7a" stroke-width="1.1"/><line x1="1470.6" y1="993.8" x2="1485.5" y2="1008.1" stroke="#d8507a" stroke-width="1.1"/><rect x="1476.8" y="999.5" width="3.2" height="3.2" fill="none" stroke="#e8e8e8" stroke-width="0.9"/>
<path d="M1498.00 998.90 L1508.00 998.90 L1503.00 1003.90 Z" fill="#dcdcdc"/>
<path d="M1519 1008.5 L1537.5 994 M1519 1009 L1538.8 1009" stroke="#e0e0e0" stroke-width="1.3"/><path d="M1519 1009 L1538.8 1009" stroke="#9a9ea6" stroke-width="1.8"/><rect x="1526.5" y="1001" width="3" height="3" fill="#e0e0e0"/>
<rect x="1551.5" y="994.5" width="18.5" height="17.5" fill="none" stroke="#f2f2f2" stroke-width="1.3"/><rect x="1548.5" y="992" width="5" height="5" fill="#5b8fc4" stroke="#f2f2f2" stroke-width="1.2"/>
<path d="M1578.95 998.90 L1588.65 998.90 L1583.80 1003.90 Z" fill="#dcdcdc"/>
<path d="M1610.6 992 L1619.1999999999998 1011.5 L1610.6 1006.4 L1602.0 1011.5 Z" fill="#f4f4f4"/>
<circle cx="1618.5" cy="996" r="3.3" fill="none" stroke="#f4f4f4" stroke-width="1.2"/>
<path d="M1641 992 L1649.6 1011.5 L1641 1006.4 L1632.4 1011.5 Z" fill="#dcdcdc"/>
<path d="M1647 994 L1644.5 999 L1647.5 998.5 L1645.5 1003 L1650.5 997 L1647.5 997.5 L1650 993.5 Z" fill="#dcdcdc"/>
<path d="M1671.4 992 L1680.0 1011.5 L1671.4 1006.4 L1662.8000000000002 1011.5 Z" fill="#dcdcdc"/></svg>
<div class="t" style="left:1692.5px;top:996.25px;font-size:14px;line-height:14px;color:#ececec;font-weight:400;font-family:'Liberation Sans',sans-serif;letter-spacing:-0.6px;">1:1</div>
<div style="left:1893px;top:992.8000000000001px;width:20px;height:2.6px;background:#e4e4e4;"></div>
<div style="left:1893px;top:1000.1px;width:20px;height:2.6px;background:#e4e4e4;"></div>
<div style="left:1893px;top:1007.7px;width:20px;height:2.6px;background:#e4e4e4;"></div>
<svg width="1919" height="1018" viewBox="0 0 1919 1018"><path d="M1714.40 998.90 L1724.20 998.90 L1719.30 1003.90 Z" fill="#dcdcdc"/>
<rect x="1743.5" y="990.3" width="6" height="5" fill="#dcdcdc" transform="rotate(0 1746.5 1001.8)"/>
<rect x="1743.5" y="990.3" width="6" height="5" fill="#dcdcdc" transform="rotate(45 1746.5 1001.8)"/>
<rect x="1743.5" y="990.3" width="6" height="5" fill="#dcdcdc" transform="rotate(90 1746.5 1001.8)"/>
<rect x="1743.5" y="990.3" width="6" height="5" fill="#dcdcdc" transform="rotate(135 1746.5 1001.8)"/>
<rect x="1743.5" y="990.3" width="6" height="5" fill="#dcdcdc" transform="rotate(180 1746.5 1001.8)"/>
<rect x="1743.5" y="990.3" width="6" height="5" fill="#dcdcdc" transform="rotate(225 1746.5 1001.8)"/>
<rect x="1743.5" y="990.3" width="6" height="5" fill="#dcdcdc" transform="rotate(270 1746.5 1001.8)"/>
<rect x="1743.5" y="990.3" width="6" height="5" fill="#dcdcdc" transform="rotate(315 1746.5 1001.8)"/>
<circle cx="1746.5" cy="1001.8" r="7.6" fill="#dcdcdc"/><circle cx="1746.5" cy="1001.8" r="3.2" fill="#363d4a"/>
<path d="M1767.20 998.90 L1777.00 998.90 L1772.10 1003.90 Z" fill="#dcdcdc"/>
<path d="M1797.5 992 L1797.5 1011 M1788 1001.4 L1807.2 1001.4" stroke="#e4e4e4" stroke-width="3"/>
<rect x="1821" y="992.3" width="8" height="7.3" fill="none" stroke="#e0e0e0" stroke-width="1.1"/><circle cx="1836.4" cy="1000.7" r="4.3" fill="none" stroke="#e0e0e0" stroke-width="1.1"/><path d="M1828.9 1004 L1833.6 1012 L1824.2 1012 Z" fill="none" stroke="#e0e0e0" stroke-width="1.1"/>
<rect x="1861.5" y="994.3" width="19.5" height="14.5" fill="none" stroke="#e0e0e0" stroke-width="1.2"/><path d="M1865 1006 L1869 1002 M1877.5 997 L1873.5 1001" stroke="#e0e0e0" stroke-width="1.3"/><path d="M1864 1007 L1864 1002.5 L1868.5 1007 Z M1878.5 996 L1878.5 1000.5 L1874 996 Z" fill="#e0e0e0"/></svg>
</body></html>
